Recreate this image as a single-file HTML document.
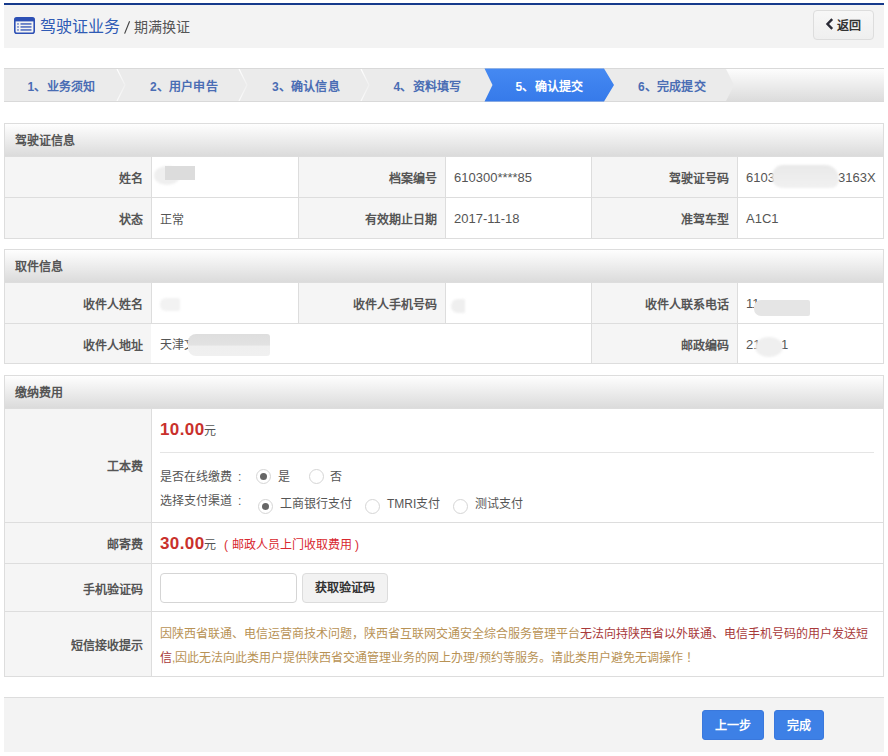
<!DOCTYPE html>
<html lang="zh-CN"><head><meta charset="utf-8">
<style>
*{margin:0;padding:0;box-sizing:border-box}
html,body{width:888px;height:756px;overflow:hidden;background:#fff}
body{font-family:"Liberation Sans",sans-serif;font-size:12px;color:#555;position:relative}
</style></head><body>
<div style="position:absolute;left:4px;top:3px;width:880px;height:2px;background:#163a8c"></div>
<div style="position:absolute;left:4px;top:5px;width:880px;height:43px;background:#f3f3f3"></div>
<svg style="position:absolute;left:14px;top:17px" width="21" height="17" viewBox="0 0 21 17">
<rect x="0.8" y="0.8" width="19.4" height="15.4" rx="2" fill="none" stroke="#2d50b5" stroke-width="1.6"/>
<rect x="0.8" y="0.8" width="19.4" height="3.6" fill="#2d50b5"/>
<rect x="6.5" y="6.3" width="11" height="1.3" fill="#2d50b5"/><rect x="6.5" y="9.3" width="11" height="1.3" fill="#2d50b5"/><rect x="6.5" y="12.3" width="11" height="1.3" fill="#2d50b5"/>
<rect x="3.3" y="6.3" width="1.4" height="1.3" fill="#2d50b5"/><rect x="3.3" y="9.3" width="1.4" height="1.3" fill="#2d50b5"/><rect x="3.3" y="12.3" width="1.4" height="1.3" fill="#2d50b5"/>
</svg>
<div style="position:absolute;left:40px;top:15.0px;line-height:24px;white-space:nowrap;font-size:16px;color:#2f5bb5">驾驶证业务</div>
<svg style="position:absolute;left:120px;top:18px" width="14" height="18" viewBox="0 0 14 18"><line x1="4.6" y1="15.6" x2="9.6" y2="3.2" stroke="#444" stroke-width="1.15"/></svg>
<div style="position:absolute;left:134px;top:17.3px;line-height:20px;white-space:nowrap;font-size:14px;color:#555">期满换证</div>
<div style="position:absolute;left:813px;top:10px;width:61px;height:30px;border:1px solid #ddd;border-radius:4px;background:linear-gradient(#f7f7f7,#efefef)"></div>
<svg style="position:absolute;left:825px;top:18px" width="10" height="12" viewBox="0 0 10 12"><polyline points="7.2,1.2 2.5,6 7.2,10.8" fill="none" stroke="#2a2a35" stroke-width="2.4"/></svg>
<div style="position:absolute;left:837px;top:15.5px;line-height:20px;white-space:nowrap;font-size:12px;font-weight:bold;color:#333">返回</div>
<svg style="position:absolute;left:0;top:0" width="888" height="110" viewBox="0 0 888 110">
<defs><linearGradient id="g1" x1="0" y1="0" x2="0" y2="1"><stop offset="0" stop-color="#fdfdfd"/><stop offset="1" stop-color="#dcdcdc"/></linearGradient><linearGradient id="sg" gradientUnits="userSpaceOnUse" x1="0" y1="69" x2="0" y2="101"><stop offset="0" stop-color="#fff" stop-opacity="1"/><stop offset="0.5" stop-color="#fff" stop-opacity="0.25"/><stop offset="1" stop-color="#fff" stop-opacity="0.8"/></linearGradient></defs>
<rect x="4" y="69" width="880" height="32" fill="url(#g1)"/>
<polygon points="4,69 726,69 734,85 726,101 4,101" fill="#ebebeb"/>
<polyline points="117,69 125,85 117,101" fill="none" stroke="url(#sg)" stroke-width="1.2"/>
<polyline points="239,69 247,85 239,101" fill="none" stroke="url(#sg)" stroke-width="1.2"/>
<polyline points="361,69 369,85 361,101" fill="none" stroke="url(#sg)" stroke-width="1.2"/>
<rect x="4" y="68" width="880" height="1" fill="#d9d9d9"/>
<rect x="4" y="101" width="880" height="1" fill="#d9d9d9"/>
<linearGradient id="bg5" x1="0" y1="0" x2="0" y2="1"><stop offset="0" stop-color="#4589f2"/><stop offset="1" stop-color="#367aea"/></linearGradient><polygon points="484.5,68.5 604,68.5 614,85 604,101.5 484.5,101.5 492.5,85" fill="url(#bg5)"/>
</svg>
<div style="position:absolute;left:27.5px;top:77.0px;line-height:20px;white-space:nowrap;font-weight:bold;color:#4a6db4;font-size:12px;letter-spacing:0.2px">1、业务须知</div>
<div style="position:absolute;left:150px;top:77.0px;line-height:20px;white-space:nowrap;font-weight:bold;color:#4a6db4;font-size:12px;letter-spacing:0.2px">2、用户申告</div>
<div style="position:absolute;left:272px;top:77.0px;line-height:20px;white-space:nowrap;font-weight:bold;color:#4a6db4;font-size:12px;letter-spacing:0.2px">3、确认信息</div>
<div style="position:absolute;left:393.5px;top:77.0px;line-height:20px;white-space:nowrap;font-weight:bold;color:#4a6db4;font-size:12px;letter-spacing:0.2px">4、资料填写</div>
<div style="position:absolute;left:515.5px;top:77.0px;line-height:20px;white-space:nowrap;font-weight:bold;color:#fff;font-size:12px;letter-spacing:0.2px">5、确认提交</div>
<div style="position:absolute;left:638px;top:77.0px;line-height:20px;white-space:nowrap;font-weight:bold;color:#4a6db4;font-size:12px;letter-spacing:0.2px">6、完成提交</div>
<div style="position:absolute;left:4px;top:123px;width:880px;height:116px;border:1px solid #ddd;background:#fff;box-sizing:border-box"></div>
<div style="position:absolute;left:5px;top:124px;width:878px;height:32px;background:linear-gradient(#fefefe,#dbdbdb)"></div>
<div style="position:absolute;left:5px;top:156px;width:878px;height:1px;background:#ddd"></div>
<div style="position:absolute;left:15px;top:130.5px;line-height:20px;white-space:nowrap;font-weight:bold;color:#555;font-size:12px">驾驶证信息</div>
<div style="position:absolute;left:151px;top:157px;width:1px;height:81px;background:#ddd"></div>
<div style="position:absolute;left:298px;top:157px;width:1px;height:81px;background:#ddd"></div>
<div style="position:absolute;left:445px;top:157px;width:1px;height:81px;background:#ddd"></div>
<div style="position:absolute;left:591px;top:157px;width:1px;height:81px;background:#ddd"></div>
<div style="position:absolute;left:737px;top:157px;width:1px;height:81px;background:#ddd"></div>
<div style="position:absolute;left:5px;top:197px;width:878px;height:1px;background:#ddd"></div>
<div style="position:absolute;left:5px;top:157px;width:146px;height:40px;background:#f5f5f5"></div>
<div style="position:absolute;left:299px;top:157px;width:146px;height:40px;background:#f5f5f5"></div>
<div style="position:absolute;left:592px;top:157px;width:145px;height:40px;background:#f5f5f5"></div>
<div style="position:absolute;left:5px;top:198px;width:146px;height:40px;background:#f5f5f5"></div>
<div style="position:absolute;left:299px;top:198px;width:146px;height:40px;background:#f5f5f5"></div>
<div style="position:absolute;left:592px;top:198px;width:145px;height:40px;background:#f5f5f5"></div>
<div style="position:absolute;right:745px;top:168.5px;line-height:20px;white-space:nowrap;font-weight:bold;color:#555;font-size:12px">姓名</div>
<div style="position:absolute;right:451px;top:168.5px;line-height:20px;white-space:nowrap;font-weight:bold;color:#555;font-size:12px">档案编号</div>
<div style="position:absolute;right:159px;top:168.5px;line-height:20px;white-space:nowrap;font-weight:bold;color:#555;font-size:12px">驾驶证号码</div>
<div style="position:absolute;right:745px;top:209.5px;line-height:20px;white-space:nowrap;font-weight:bold;color:#555;font-size:12px">状态</div>
<div style="position:absolute;right:451px;top:209.5px;line-height:20px;white-space:nowrap;font-weight:bold;color:#555;font-size:12px">有效期止日期</div>
<div style="position:absolute;right:159px;top:209.5px;line-height:20px;white-space:nowrap;font-weight:bold;color:#555;font-size:12px">准驾车型</div>
<div style="position:absolute;left:160px;top:209.5px;line-height:20px;white-space:nowrap;color:#555;font-size:12px">正常</div>
<div style="position:absolute;left:454px;top:167.5px;line-height:20px;white-space:nowrap;color:#555;font-size:13px">610300****85</div>
<div style="position:absolute;left:454px;top:208.5px;line-height:20px;white-space:nowrap;color:#555;font-size:13px">2017-11-18</div>
<div style="position:absolute;left:746px;top:167.5px;line-height:20px;white-space:nowrap;color:#555;font-size:13px">6103</div>
<div style="position:absolute;left:838px;top:167.5px;line-height:20px;white-space:nowrap;color:#555;font-size:13px">3163X</div>
<div style="position:absolute;left:746px;top:208.5px;line-height:20px;white-space:nowrap;color:#555;font-size:13px">A1C1</div>
<div style="position:absolute;left:154px;top:166px;width:26px;height:19px;background:#efefef;border-radius:50%;filter:blur(1px)"></div>
<div style="position:absolute;left:165px;top:166px;width:30px;height:14px;background:#dcdcdc;filter:blur(0.6px)"></div>
<div style="position:absolute;left:772px;top:165px;width:67px;height:23px;background:linear-gradient(#e9e9e9,#f1f1f1);border-radius:11px 14px 8px 10px;filter:blur(0.8px)"></div>
<div style="position:absolute;left:4px;top:249px;width:880px;height:115px;border:1px solid #ddd;background:#fff;box-sizing:border-box"></div>
<div style="position:absolute;left:5px;top:250px;width:878px;height:32px;background:linear-gradient(#fefefe,#dbdbdb)"></div>
<div style="position:absolute;left:5px;top:282px;width:878px;height:1px;background:#ddd"></div>
<div style="position:absolute;left:15px;top:256.5px;line-height:20px;white-space:nowrap;font-weight:bold;color:#555;font-size:12px">取件信息</div>
<div style="position:absolute;left:151px;top:283px;width:1px;height:40px;background:#ddd"></div>
<div style="position:absolute;left:298px;top:283px;width:1px;height:40px;background:#ddd"></div>
<div style="position:absolute;left:445px;top:283px;width:1px;height:40px;background:#ddd"></div>
<div style="position:absolute;left:591px;top:283px;width:1px;height:80px;background:#ddd"></div>
<div style="position:absolute;left:737px;top:283px;width:1px;height:80px;background:#ddd"></div>
<div style="position:absolute;left:5px;top:323px;width:878px;height:1px;background:#ddd"></div>
<div style="position:absolute;left:5px;top:283px;width:146px;height:40px;background:#f5f5f5"></div>
<div style="position:absolute;left:299px;top:283px;width:146px;height:40px;background:#f5f5f5"></div>
<div style="position:absolute;left:592px;top:283px;width:145px;height:40px;background:#f5f5f5"></div>
<div style="position:absolute;left:5px;top:324px;width:146px;height:39px;background:#f5f5f5"></div>
<div style="position:absolute;left:592px;top:324px;width:145px;height:39px;background:#f5f5f5"></div>
<div style="position:absolute;right:745px;top:294.5px;line-height:20px;white-space:nowrap;font-weight:bold;color:#555;font-size:12px">收件人姓名</div>
<div style="position:absolute;right:451px;top:294.5px;line-height:20px;white-space:nowrap;font-weight:bold;color:#555;font-size:12px">收件人手机号码</div>
<div style="position:absolute;right:159px;top:294.5px;line-height:20px;white-space:nowrap;font-weight:bold;color:#555;font-size:12px">收件人联系电话</div>
<div style="position:absolute;right:745px;top:335.5px;line-height:20px;white-space:nowrap;font-weight:bold;color:#555;font-size:12px">收件人地址</div>
<div style="position:absolute;right:159px;top:335.5px;line-height:20px;white-space:nowrap;font-weight:bold;color:#555;font-size:12px">邮政编码</div>
<div style="position:absolute;left:160px;top:334.5px;line-height:20px;white-space:nowrap;color:#555;font-size:12px">天津</div>
<div style="position:absolute;left:746px;top:293.5px;line-height:20px;white-space:nowrap;color:#555;font-size:13px">11</div>
<div style="position:absolute;left:746px;top:334.5px;line-height:20px;white-space:nowrap;color:#555;font-size:13px">21</div>
<div style="position:absolute;left:781px;top:334.5px;line-height:20px;white-space:nowrap;color:#555;font-size:13px">1</div>
<div style="position:absolute;left:160px;top:298px;width:20px;height:13px;background:#f2f2f2;border-radius:6px 2px 2px 6px;filter:blur(1px)"></div>
<div style="position:absolute;left:451px;top:299px;width:14px;height:14px;background:#efefef;border-radius:7px 1px 1px 7px;filter:blur(0.8px)"></div>
<div style="position:absolute;left:754px;top:300px;width:56px;height:16px;background:#e5e5e5;border-radius:7px 2px 2px 7px;filter:blur(0.6px)"></div>
<div style="position:absolute;left:184px;top:334.5px;line-height:20px;white-space:nowrap;color:#555;font-size:12px">文</div>
<div style="position:absolute;left:188px;top:334px;width:82px;height:22px;background:linear-gradient(#dedede 0,#e2e2e2 50%,#efefef 55%,#f0f0f0);border-radius:8px 3px 3px 8px;filter:blur(0.7px)"></div>
<div style="position:absolute;left:755px;top:337px;width:28px;height:20px;background:#efefef;border-radius:50%;filter:blur(0.8px)"></div>
<div style="position:absolute;left:4px;top:375px;width:880px;height:302px;border:1px solid #ddd;background:#fff;box-sizing:border-box"></div>
<div style="position:absolute;left:5px;top:376px;width:878px;height:32px;background:linear-gradient(#fefefe,#dbdbdb)"></div>
<div style="position:absolute;left:5px;top:408px;width:878px;height:1px;background:#ddd"></div>
<div style="position:absolute;left:15px;top:382.5px;line-height:20px;white-space:nowrap;font-weight:bold;color:#555;font-size:12px">缴纳费用</div>
<div style="position:absolute;left:151px;top:409px;width:1px;height:267px;background:#ddd"></div>
<div style="position:absolute;left:5px;top:522px;width:878px;height:1px;background:#ddd"></div>
<div style="position:absolute;left:5px;top:563px;width:878px;height:1px;background:#ddd"></div>
<div style="position:absolute;left:5px;top:611px;width:878px;height:1px;background:#ddd"></div>
<div style="position:absolute;left:5px;top:409px;width:146px;height:113px;background:#f5f5f5"></div>
<div style="position:absolute;left:5px;top:523px;width:146px;height:40px;background:#f5f5f5"></div>
<div style="position:absolute;left:5px;top:564px;width:146px;height:47px;background:#f5f5f5"></div>
<div style="position:absolute;left:5px;top:612px;width:146px;height:64px;background:#f5f5f5"></div>
<div style="position:absolute;right:745px;top:457.0px;line-height:20px;white-space:nowrap;font-weight:bold;color:#555;font-size:12px">工本费</div>
<div style="position:absolute;right:745px;top:534.5px;line-height:20px;white-space:nowrap;font-weight:bold;color:#555;font-size:12px">邮寄费</div>
<div style="position:absolute;right:745px;top:579.5px;line-height:20px;white-space:nowrap;font-weight:bold;color:#555;font-size:12px">手机验证码</div>
<div style="position:absolute;right:745px;top:636.0px;line-height:20px;white-space:nowrap;font-weight:bold;color:#555;font-size:12px">短信接收提示</div>
<div style="position:absolute;left:160px;top:418.0px;line-height:24px;white-space:nowrap;"><span style="font-size:17px;font-weight:bold;color:#c9302c;letter-spacing:0.4px">10.00</span><span style="font-size:12px;color:#555;margin-left:-0.5px">元</span></div>
<div style="position:absolute;left:160px;top:452px;width:714px;height:1px;background:#e5e5e5"></div>
<div style="position:absolute;left:160px;top:467.0px;line-height:20px;white-space:nowrap;color:#555;font-size:12px">是否在线缴费<span style="margin-left:6px">:</span></div>
<div style="position:absolute;left:160px;top:491.0px;line-height:20px;white-space:nowrap;color:#555;font-size:12px">选择支付渠道<span style="margin-left:6px">:</span></div>
<div style="position:absolute;left:256.2px;top:468.8px;width:15px;height:15px;border:1px solid #d5d5d5;border-radius:50%;background:#fff"></div>
<div style="position:absolute;left:260.2px;top:472.8px;width:7px;height:7px;border-radius:50%;background:#666"></div>
<div style="position:absolute;left:278px;top:467.0px;line-height:20px;white-space:nowrap;color:#555;font-size:12px">是</div>
<div style="position:absolute;left:308.9px;top:468.8px;width:15px;height:15px;border:1px solid #d5d5d5;border-radius:50%;background:#fff"></div>
<div style="position:absolute;left:330px;top:467.0px;line-height:20px;white-space:nowrap;color:#555;font-size:12px">否</div>
<div style="position:absolute;left:258.1px;top:499.0px;width:15px;height:15px;border:1px solid #d5d5d5;border-radius:50%;background:#fff"></div>
<div style="position:absolute;left:262.1px;top:503.0px;width:7px;height:7px;border-radius:50%;background:#666"></div>
<div style="position:absolute;left:280px;top:494.0px;line-height:20px;white-space:nowrap;color:#555;font-size:12px">工商银行支付</div>
<div style="position:absolute;left:364.5px;top:499.0px;width:15px;height:15px;border:1px solid #d5d5d5;border-radius:50%;background:#fff"></div>
<div style="position:absolute;left:387px;top:494.0px;line-height:20px;white-space:nowrap;color:#555;font-size:12px">TMRI支付</div>
<div style="position:absolute;left:452.8px;top:499.0px;width:15px;height:15px;border:1px solid #d5d5d5;border-radius:50%;background:#fff"></div>
<div style="position:absolute;left:475px;top:494.0px;line-height:20px;white-space:nowrap;color:#555;font-size:12px">测试支付</div>
<div style="position:absolute;left:160px;top:532.0px;line-height:24px;white-space:nowrap;"><span style="font-size:17px;font-weight:bold;color:#c9302c;letter-spacing:0.4px">30.00</span><span style="font-size:12px;color:#555;margin-left:-0.5px">元</span><span style="font-size:12px;color:#d8282f;margin-left:8px">(</span><span style="font-size:12px;color:#d8282f;margin-left:4px">邮政人员上门收取费用</span><span style="font-size:12px;color:#d8282f;margin-left:3px">)</span></div>
<div style="position:absolute;left:160px;top:573px;width:137px;height:30px;border:1px solid #d5d5d5;border-radius:4px;background:#fff"></div>
<div style="position:absolute;left:302px;top:573px;width:86px;height:30px;border:1px solid #dcdcdc;border-radius:4px;background:#f2f2f2"></div>
<div style="position:absolute;left:345px;top:578.0px;line-height:20px;white-space:nowrap;font-weight:bold;color:#333;font-size:12px;transform:translateX(-50%)">获取验证码</div>
<div style="position:absolute;left:160px;top:621.5px;width:714px;line-height:24.3px;font-size:12px;color:#b89255">因陕西省联通、电信运营商技术问题，陕西省互联网交通安全综合服务管理平台<span style="color:#a8393a">无法向持陕西省以外联通、电信手机号码的用户发送短信</span>,因此无法向此类用户提供陕西省交通管理业务的网上办理/预约等服务。请此类用户避免无调操作<span style="margin-left:3px">！</span></div>
<div style="position:absolute;left:4px;top:697px;width:880px;height:1px;background:#ddd"></div>
<div style="position:absolute;left:4px;top:698px;width:880px;height:54px;background:#f3f3f3"></div>
<div style="position:absolute;left:702px;top:710px;width:62px;height:30px;background:#3d80e6;border-radius:3px;border:1px solid #3a78dc"></div>
<div style="position:absolute;left:733px;top:716.0px;line-height:20px;white-space:nowrap;font-weight:bold;color:#fff;font-size:12px;transform:translateX(-50%)">上一步</div>
<div style="position:absolute;left:774px;top:710px;width:50px;height:30px;background:#3d80e6;border-radius:3px;border:1px solid #3a78dc"></div>
<div style="position:absolute;left:799px;top:716.0px;line-height:20px;white-space:nowrap;font-weight:bold;color:#fff;font-size:12px;transform:translateX(-50%)">完成</div>
</body></html>
